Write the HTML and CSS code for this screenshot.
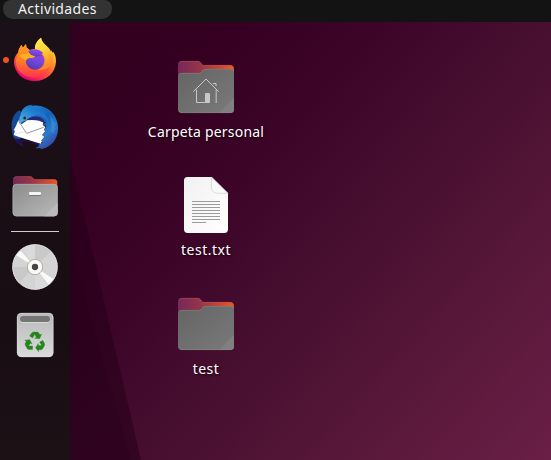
FILE: index.html
```html
<!DOCTYPE html>
<html lang="es">
<head>
<meta charset="utf-8">
<title>Escritorio</title>
<link rel="stylesheet" href="styles.css">
</head>
<body>
<header class="topbar"><button class="activities">Actividades</button></header>
<div class="workspace">
  <nav class="dock">
    <div class="launcher firefox running">
      <svg viewBox="33 15 144 144">
        <defs>
          <linearGradient id="fire" x1=".85" y1="0" x2=".35" y2="1"><stop stop-color="#fff34f"/><stop offset=".3" stop-color="#ffc22d"/><stop offset=".55" stop-color="#ff752f"/><stop offset=".78" stop-color="#ff3b48"/><stop offset="1" stop-color="#e40075"/></linearGradient>
          <linearGradient id="flame" x1="0" y1="0" x2=".4" y2="1"><stop stop-color="#fff24c"/><stop offset=".5" stop-color="#ffd43a"/><stop offset="1" stop-color="#ff8a25"/></linearGradient>
          <linearGradient id="globe" x1=".7" y1="0" x2=".3" y2="1"><stop stop-color="#a83bea"/><stop offset=".5" stop-color="#7248dc"/><stop offset="1" stop-color="#5639a8"/></linearGradient>
          <linearGradient id="fox" x1="0" y1="0" x2="0" y2="1"><stop stop-color="#ff9b16"/><stop offset=".5" stop-color="#ff7928"/><stop offset="1" stop-color="#ff354a"/></linearGradient>
        </defs>
        <path fill="url(#fire)" d="M123 23C111 32 104 44 105 56L89 60 79 52 78 43Q72 48 69 54L64 45Q56 56 54 68C46 76 42 85 42 96C43 129 69 153 104 153C141 153 166 128 168 95C168 84 166 75 162 70L160 65 157 68 154 60 153 66C148 48 126 43 123 23Z"/>
        <path fill="url(#fox)" d="M64 45L69 54 78 43 79 52 88 61 105 77Q97 83 86 84C73 97 83 120 105 120C127 120 144 110 143 88C158 106 145 141 106 143C69 144 45 119 48 91L54 68Q56 56 64 45Z"/>
        <path fill="url(#flame)" d="M123 23C111 32 104 44 105 59Q127 61 136 79C143 98 131 115 113 119C140 123 158 108 160 88L160 75 153 66C148 48 126 43 123 23Z"/>
        <circle cx="105" cy="91" r="28" fill="url(#globe)"/>
        <path fill="url(#globe)" d="M81 68Q91 57 106 58Q122 60 130 70L121 71 127 78 90 80Z"/>
        <path fill="#ffad1c" d="M58 77Q65 70 78 72L86 66Q90 76 105 78Q104 85 89 84Q82 84 77 92Q70 88 65 84Z"/>
        <path fill="#ff9425" d="M64 45Q59 56 60 68L74 62 79 70 86 67 81 58 79 52 78 43Q72 48 69 54Z"/>
      </svg>
    </div>
    <div class="launcher">
      <svg viewBox="33 18 144 144">
        <defs>
          <linearGradient id="bird" x1=".1" y1="0" x2=".8" y2="1"><stop stop-color="#2486dc"/><stop offset=".45" stop-color="#1461b9"/><stop offset=".7" stop-color="#2b7dcc"/><stop offset="1" stop-color="#393c9f"/></linearGradient>
          <linearGradient id="head" x1="0" y1="1" x2="1" y2="0"><stop stop-color="#52bae8"/><stop offset=".5" stop-color="#2384d0"/><stop offset="1" stop-color="#1558b3"/></linearGradient>
        </defs>
        <path fill="#174a94" d="M58 37C40 48 33 68 35 92C37 120 49 137 70 145L59 126 72 88 75 50Z"/>
        <path fill="#22104f" d="M41 121L128 137 118 145Q88 127 65 132L71 146Q50 140 41 121Z"/>
        <path fill="url(#bird)" d="M66 42C79 22 111 17 136 29C160 39 175 65 174 94C173 126 150 153 117 154L127 149 105 151 120 143 114 142 129 133 121 130 134 116 126 111 138 98 131 97 139 84 128 81 138 73 121 68 83 62Z"/>
        <path fill="#fff" d="M57 66Q50 73 49 82L41 97 45 98 41 111Q70 122 122 137L126 130 123 128 133 116 126 111 137 98 131 97 136 87 128 81 131 73Q119 63 101 63Q83 62 77 70L65 79Z"/>
        <path fill="url(#head)" d="M98 20C78 20 65 31 62 50Q55 63 59 79Q67 67 80 68Q87 54 112 51Q132 52 144 72C140 40 116 29 94 33Q86 27 98 20Z"/>
        <path fill="#24277b" d="M79 67Q91 52 116 56Q130 60 134 76Q114 62 79 67Z"/>
        <path fill="none" stroke="#808393" stroke-width="2.5" d="M56 70L80 106 131 88"/>
        <path fill="none" stroke="#cbd1df" stroke-width="1.5" d="M44 108L76 101"/>
        <path fill="#3e9ade" d="M145 43L168 83 161 80 167 96 160 94 163 107 153 101Q157 64 145 43Z" opacity=".5"/>
        <circle cx="74" cy="60" r="4.5" fill="#4b2d2a"/><circle cx="74" cy="59" r="2" fill="#111"/>
      </svg>
    </div>
    <div class="launcher">
      <svg viewBox="33 12 144 144">
        <defs>
          <linearGradient id="back"><stop stop-color="#76285a"/><stop offset=".4" stop-color="#963548"/><stop offset=".75" stop-color="#c94735"/><stop offset="1" stop-color="#ef5922"/></linearGradient>
          <linearGradient id="front" x1="0" y1="0" x2="1" y2="1"><stop stop-color="#8c8c8c"/><stop offset="1" stop-color="#b9b9b9"/></linearGradient>
        </defs>
        <path fill="url(#back)" d="M39 65V36Q39 25 50 25H91Q96 25 98 29L104 34H162Q172 34 172 45V67Z"/>
        <path fill="none" stroke="#c06556" d="M41 31Q43 26 51 26H91L98 30 104 35H162Q169 35 171 40"/>
        <rect x="38" y="48" width="135" height="97" rx="12" fill="url(#front)"/>
        <path fill="#bbb" d="M133 145L173 105V133Q173 145 161 145Z"/>
        <rect x="38.75" y="48.75" width="133.5" height="95.5" rx="11" fill="none" stroke="#bababa" stroke-width="1.5"/>
        <rect x="87" y="76" width="36" height="8" rx="3" fill="#777"/><rect x="87" y="72" width="36" height="9" rx="3" fill="#f5f5f5"/>
      </svg>
    </div>
    <hr class="separator">
    <div class="launcher">
      <svg viewBox="33 15 144 144">
        <circle cx="105" cy="87" r="68" fill="#d4d4d4"/>
        <path fill="#c9c9c9" d="M105 87V20A67 67 0 0 1 153 40ZM105 87H38A67 67 0 0 0 57 135Z"/>
        <path fill="#dadada" d="M105 87V20A67 67 0 0 0 68 32ZM105 87V154A67 67 0 0 0 142 142Z"/>
        <path fill="#fafafa" d="M105 87L49 52Q53 44 63 39ZM105 87L160 123Q155 133 146 140Z"/>
        <circle cx="105" cy="87" r="67" fill="none" stroke="#e4e4e4" stroke-width="2"/>
        <circle cx="105" cy="87" r="23" fill="#fafafa" stroke="#b5ac9b" stroke-width="3"/>
        <circle cx="105" cy="87" r="9.5" fill="#454545"/>
      </svg>
    </div>
    <div class="launcher">
      <svg viewBox="33 21 144 144">
        <defs>
          <linearGradient id="bin" x2="0" y2="1"><stop stop-color="#b9b9b9"/><stop offset="1" stop-color="#dadada"/></linearGradient>
          <path id="arrow" d="M89 96L95 87Q97 84 101 84H111Q115 84 117 88L120 93 125 90 119 104 104 103 109 100 104 91 98 102Z"/>
        </defs>
        <rect x="51" y="27" width="109" height="132" rx="13" fill="url(#bin)"/>
        <rect x="51.75" y="27.75" width="107.5" height="130.5" rx="12" fill="none" stroke="#e4e4e4" stroke-width="1.5"/>
        <rect x="60" y="37" width="90" height="19" rx="8" fill="#e1e1e1"/><rect x="60" y="36" width="90" height="18" rx="8" fill="#757575"/>
        <g fill="#23851c" stroke="#23851c">
          <use href="#arrow"/>
          <use href="#arrow" transform="rotate(120 105 114)"/>
          <use href="#arrow" transform="rotate(240 105 114)"/>
        </g>
      </svg>
    </div>
  </nav>
  <main class="desktop">
    <svg class="facets" viewBox="0 0 481 438"><path fill="#240018" fill-opacity=".55" d="M0 133L71 438H0Z"/><path fill="#23001a" fill-opacity=".22" d="M0 225L61 438H0Z"/></svg>
    <div class="files">
      <div class="file">
        <svg viewBox="102 15 192 192">
          <defs><linearGradient id="gray" x2="1" y2="1"><stop stop-color="#646464"/><stop offset="1" stop-color="#7a7a7a"/></linearGradient>
          <g id="folder">
            <path fill="url(#back)" d="M114 75V45Q114 33 126 33H174Q180 33 183 38L188 45H269Q282 45 282 58V75Z"/>
            <path fill="none" stroke="#b15358" stroke-width="1.5" d="M116 39Q119 34 127 34H175L183 40 188 46H269Q277 46 281 52"/>
            <path fill="url(#gray)" d="M114 80Q114 69 125 69H177Q181 69 184 66L190 59Q193 57 198 57H272Q282 57 282 67V177Q282 189 271 189H125Q114 189 114 178Z"/>
            <path fill="#808080" d="M237 189L282 144V177Q282 189 271 189Z"/>
            <path fill="none" stroke="#898989" stroke-width="1.5" d="M116 75Q119 70 126 70H178L184 67 190 60Q193 58 198 58H272Q278 58 281 63M116 182Q119 188 126 188H270Q278 188 281 181"/>
          </g></defs>
          <use href="#folder"/>
          <path fill="none" stroke="#c8c8c8" stroke-width="3" d="M160 125L198 87 236 125M169.500 119V157.500H208M228.500 118V159M219 100.500H228V108"/>
          <path fill="#c8c8c8" d="M195 158V132Q195 129 199 129H206Q210 129 210 133V158Z"/>
        </svg>
        <span class="label home">Carpeta personal</span>
      </div>
      <div class="file">
        <svg viewBox="102 9 192 192">
          <defs><linearGradient id="page" x2="1" y2="1"><stop stop-color="#f1f1f1"/><stop offset="1" stop-color="#fff"/></linearGradient></defs>
          <path fill="url(#page)" d="M142 21H215L264 69V178Q264 189 253 189H143Q132 189 132 178V32Q132 21 142 21Z"/>
          <path fill="#fafafa" stroke="#d4d4d4" stroke-width="2.5" d="M214 22V49Q214 70 236 70H263L215 22Z"/>
          <path stroke="#9b9b9b" stroke-width="3" d="M156 94.500H240M156 103.500H240M156 112.500H240M156 121.500H240M156 130.500H240M156 139.500H240M156 148.500H240M156 157.500H198"/>
        </svg>
        <span class="label text">test.txt</span>
      </div>
      <div class="file last">
        <svg viewBox="102 15 192 192"><use href="#folder"/></svg>
        <span class="label text">test</span>
      </div>
    </div>
  </main>
</div>
</body>
</html>
```

FILE: styles.css
```css
* { box-sizing: border-box; }
body {
  margin: 0;
  width: 551px;
  height: 460px;
  display: flex;
  flex-direction: column;
  overflow: hidden;
  color: #fff;
  font-family: "Noto Sans", "Open Sans", sans-serif;
}
.topbar { height: 22px; padding-left: 3px; background: #131313; }
.activities {
  display: flex;
  align-items: center;
  justify-content: center;
  width: 109px;
  height: 19px;
  padding: 0 0 2px;
  border: 0;
  border-radius: 8px 8px 10px 10px;
  background: #333;
  color: #f2f2f2;
  font: 14px/17px "Noto Sans", sans-serif;
  letter-spacing: .38px;
}
.workspace { flex: 1; display: flex; min-height: 0; }
.dock {
  width: 70px;
  padding-top: 13px;
  display: flex;
  flex-direction: column;
  align-items: center;
  background: linear-gradient(#1b1017, #190d14 70%, #1c1115);
}
.launcher { width: 48px; height: 48px; margin-bottom: 20px; position: relative; }
.launcher svg, .file svg { display: block; width: 100%; }
.firefox { margin-bottom: 21px; }
.running::before {
  content: "";
  position: absolute;
  left: -8px;
  top: 22px;
  width: 6px;
  height: 6px;
  border-radius: 50%;
  background: #e95420;
}
.separator { width: 48px; height: 1px; margin: -9px 0 11px; border: 0; background: #d0cdcf; }
.desktop {
  flex: 1;
  position: relative;
  background: linear-gradient(132deg, #32001f 0%, #350021 20%, #3c0528 35%, #460e2f 53%, #561738 74%, #6a1f46 100%);
}
.facets { position: absolute; inset: 0; width: 481px; height: 438px; }
.files { position: relative; width: 272px; padding-top: 33px; }
.file { display: flex; flex-direction: column; align-items: center; height: 118px; }
.file.last { margin-top: 1px; }
.file svg { width: 64px; height: 64px; }
.label {
  margin-top: 3px;
  font-size: 14px;
  line-height: 20px;
  white-space: nowrap;
  text-shadow: 1px 1px 2px #12000c;
}
.home { letter-spacing: .2px; }
.text { letter-spacing: .5px; }
```
